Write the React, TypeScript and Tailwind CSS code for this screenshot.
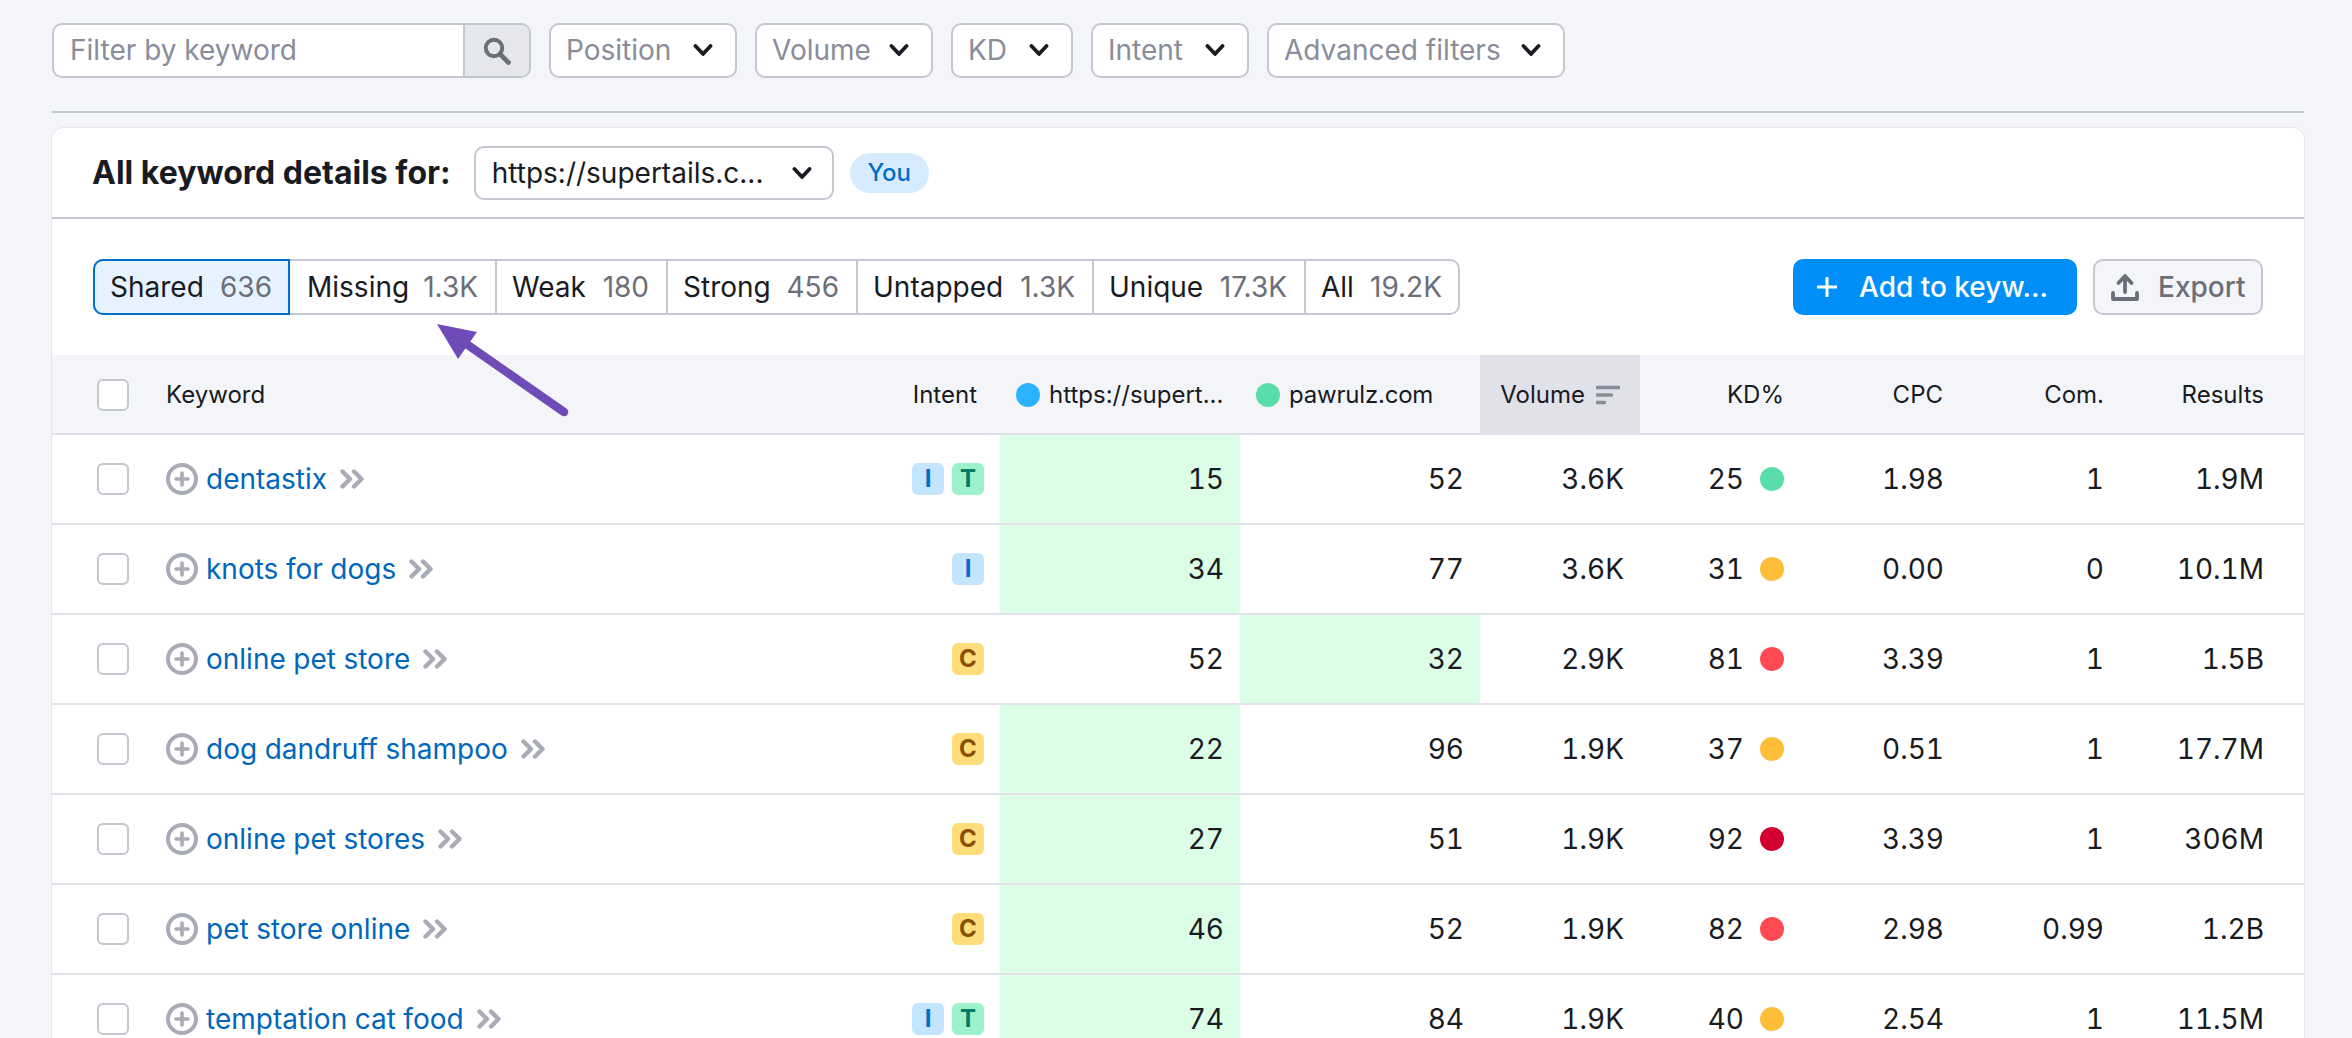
import React from 'react';

const rows = [
  { kw: 'dentastix', intent: ['I', 'T'], a: '15', b: '52', vol: '3.6K', kd: '25', dot: 'bg-[#59ddaa]', cpc: '1.98', com: '1', res: '1.9M', best: 'a' },
  { kw: 'knots for dogs', intent: ['I'], a: '34', b: '77', vol: '3.6K', kd: '31', dot: 'bg-[#ffbe37]', cpc: '0.00', com: '0', res: '10.1M', best: 'a' },
  { kw: 'online pet store', intent: ['C'], a: '52', b: '32', vol: '2.9K', kd: '81', dot: 'bg-[#ff4953]', cpc: '3.39', com: '1', res: '1.5B', best: 'b' },
  { kw: 'dog dandruff shampoo', intent: ['C'], a: '22', b: '96', vol: '1.9K', kd: '37', dot: 'bg-[#ffbe37]', cpc: '0.51', com: '1', res: '17.7M', best: 'a' },
  { kw: 'online pet stores', intent: ['C'], a: '27', b: '51', vol: '1.9K', kd: '92', dot: 'bg-[#d1002f]', cpc: '3.39', com: '1', res: '306M', best: 'a' },
  { kw: 'pet store online', intent: ['C'], a: '46', b: '52', vol: '1.9K', kd: '82', dot: 'bg-[#ff4953]', cpc: '2.98', com: '0.99', res: '1.2B', best: 'a' },
  { kw: 'temptation cat food', intent: ['I', 'T'], a: '74', b: '84', vol: '1.9K', kd: '40', dot: 'bg-[#ffbe37]', cpc: '2.54', com: '1', res: '11.5M', best: 'a' },
];

const tabs = [
  { label: 'Shared', count: '636', cls: 'my-[-2px] ml-[-2px] w-[197px] rounded-l-[10px] border-2 border-[#006dca] bg-[#e6f3ff] pl-[15px] pr-[16px]' },
  { label: 'Missing', count: '1.3K', cls: 'w-[205px] pl-[17px] pr-[17px]' },
  { label: 'Weak', count: '180', cls: 'w-[171px] border-l-2 border-[#c4c7cf] pl-[15px] pr-[17px]' },
  { label: 'Strong', count: '456', cls: 'w-[190px] border-l-2 border-[#c4c7cf] pl-[15px] pr-[17px]' },
  { label: 'Untapped', count: '1.3K', cls: 'w-[236px] border-l-2 border-[#c4c7cf] pl-[15px] pr-[17px]' },
  { label: 'Unique', count: '17.3K', cls: 'w-[212px] border-l-2 border-[#c4c7cf] pl-[15px] pr-[17px]' },
  { label: 'All', count: '19.2K', cls: 'w-[154px] border-l-2 border-[#c4c7cf] pl-[15px] pr-[16px]' },
];

const filters = [
  { label: 'Position', w: 'w-[188px]' },
  { label: 'Volume', w: 'w-[178px]' },
  { label: 'KD', w: 'w-[122px]' },
  { label: 'Intent', w: 'w-[158px]' },
  { label: 'Advanced filters', w: 'w-[298px]' },
];

const badgeStyles: Record<string, string> = {
  I: 'bg-[#c4e5fe] text-[#006dca]',
  T: 'bg-[#9ef2c9] text-[#007c65]',
  C: 'bg-[#ffdd7a] text-[#8a5000]',
};

const gridCols = 'grid grid-cols-[848px_100px_240px_240px_160px_160px_160px_160px_184px]';

function Chevron() {
  return (
    <svg width="20" height="14" viewBox="0 0 20 14" fill="none" className="shrink-0">
      <path d="M2.5 3l7.5 8 7.5-8" stroke="#191b23" strokeWidth="3.8" strokeLinecap="round" strokeLinejoin="round" />
    </svg>
  );
}

function Checkbox() {
  return <div className="h-8 w-8 shrink-0 rounded-md border-2 border-[#c4c7cf] bg-white" />;
}

function AddCircle() {
  return (
    <svg width="32" height="32" viewBox="0 0 32 32" fill="none" className="shrink-0">
      <circle cx="16" cy="16" r="14" stroke="#a9abb6" strokeWidth="4" />
      <path d="M16 10v12M10 16h12" stroke="#a9abb6" strokeWidth="3.6" strokeLinecap="round" />
    </svg>
  );
}

function DoubleChevron() {
  return (
    <svg width="25" height="20" viewBox="0 0 25 20" fill="none" className="shrink-0">
      <path d="M2.5 2.5l7.5 7.5-7.5 7.5M14 2.5l7.5 7.5-7.5 7.5" stroke="#a9abb6" strokeWidth="4.4" strokeLinecap="round" strokeLinejoin="round" />
    </svg>
  );
}

export default function App() {
  return (
    <div className="relative h-[1038px] w-[2352px] overflow-hidden bg-[#f4f5f9] pl-[52px] pr-[48px] pt-[23px] font-['Inter',sans-serif] text-[#191b23]">
      {/* filters */}
      <div className="flex h-[55px] items-stretch gap-[18px] text-[28px] text-[#898d9a]">
        <div className="flex w-[479px] overflow-hidden rounded-[10px] border-2 border-[#c4c7cf] bg-white">
          <div className="flex flex-1 items-center pb-[1px] pl-[16px]">Filter by keyword</div>
          <div className="flex w-[66px] items-center justify-center border-l-2 border-[#c4c7cf] bg-[#e6e7ed]">
            <svg width="28" height="28" viewBox="0 0 28 28" fill="none">
              <circle cx="11" cy="11" r="8.2" stroke="#6c6e79" strokeWidth="4" />
              <path d="M17 17l8.5 8.5" stroke="#6c6e79" strokeWidth="4.6" strokeLinecap="round" />
            </svg>
          </div>
        </div>
        {filters.map((f) => (
          <div
            key={f.label}
            className={`flex items-center justify-between rounded-[10px] border-2 border-[#c4c7cf] bg-white pb-[1px] pl-[15px] pr-[22px] ${f.w}`}
          >
            <span>{f.label}</span>
            <Chevron />
          </div>
        ))}
      </div>

      <div className="mt-[33px] h-[2px] bg-[#c4c7cf]" />

      {/* card */}
      <div className="mt-[15px] rounded-t-[12px] bg-white shadow-[0_0_0_1px_#e6e7ed]">
        <div className="flex h-[91px] items-center gap-[23px] border-b-2 border-[#c4c7cf] pl-[40px]">
          <span className="text-[32px] font-bold">All keyword details for:</span>
          <div className="flex h-[54px] w-[360px] items-center justify-between rounded-[10px] border-2 border-[#c4c7cf] pl-[16px] pr-[20px] text-[28px]">
            <span>https://supertails.c...</span>
            <Chevron />
          </div>
          <span className="ml-[-7px] flex h-[40px] w-[79px] items-center justify-center rounded-[20px] bg-[#d6ecfe] text-[24px] font-medium text-[#006dca]">
            You
          </span>
        </div>

        <div className="flex h-[136px] items-start justify-between pl-[41px] pr-[41px] pt-[40px]">
          <div className="flex h-[56px] rounded-[10px] border-2 border-[#c4c7cf] text-[28px]">
            {tabs.map((t) => (
              <div key={t.label} className={`flex items-center justify-between ${t.cls}`}>
                <span>{t.label}</span>
                <span className="text-[#6c6e79]">{t.count}</span>
              </div>
            ))}
          </div>

          <div className="flex gap-[16px]">
            <div className="flex h-[56px] w-[284px] items-center gap-[22px] rounded-[10px] bg-[#008ff8] pl-[24px] text-[28px] font-medium text-white">
              <svg width="20" height="20" viewBox="0 0 20 20" fill="none">
                <path d="M10 1v18M1 10h18" stroke="#fff" strokeWidth="3" strokeLinecap="round" />
              </svg>
              <span>Add to keyw...</span>
            </div>
            <div className="flex h-[56px] w-[170px] items-center gap-[19px] rounded-[10px] border-2 border-[#c4c7cf] bg-[#f4f5f9] pl-[16px] text-[28px] font-medium text-[#6c6e79]">
              <svg width="28" height="28" viewBox="0 0 28 28" fill="none">
                <path d="M14 19V4M7.5 10L14 3l6.5 7" stroke="#6c6e79" strokeWidth="3.8" strokeLinecap="round" strokeLinejoin="round" />
                <path d="M2 20v6h24v-6" stroke="#6c6e79" strokeWidth="3.8" strokeLinecap="round" strokeLinejoin="round" />
              </svg>
              <span>Export</span>
            </div>
          </div>
        </div>

        {/* table header */}
        <div className={`${gridCols} h-[80px] border-b-2 border-[#e0e1e9] bg-[#f4f5f9] pt-[2px] text-[24px]`}>
          <div className="flex items-center gap-[37px] pl-[45px]">
            <Checkbox />
            <span>Keyword</span>
          </div>
          <div className="flex items-center justify-end pr-[23px]">Intent</div>
          <div className="flex items-center gap-[9px] pl-[16px]">
            <span className="h-6 w-6 rounded-full bg-[#2bb3ff]" />
            <span>https://supert...</span>
          </div>
          <div className="flex items-center gap-[9px] pl-[16px]">
            <span className="h-6 w-6 rounded-full bg-[#59ddaa]" />
            <span className="tracking-[-0.2px]">pawrulz.com</span>
          </div>
          <div className="mt-[-2px] flex items-center justify-end gap-[11px] bg-[#e0e1e9] pr-[20px] pt-[2px]">
            <span>Volume</span>
            <svg width="24" height="20" viewBox="0 0 24 20" fill="none">
              <path d="M1.5 2.5h21M1.5 10h14M1.5 17.5h7" stroke="#898d9a" strokeWidth="3.6" strokeLinecap="round" />
            </svg>
          </div>
          <div className="flex items-center justify-end pr-[16px]">KD%</div>
          <div className="flex items-center justify-end pr-[17px]">CPC</div>
          <div className="flex items-center justify-end pr-[16px]">Com.</div>
          <div className="flex items-center justify-end pr-[40px]">Results</div>
        </div>

        {/* table rows */}
        {rows.map((r) => (
          <div key={r.kw} className={`${gridCols} h-[90px] border-b-2 border-[#e0e1e9] bg-white text-[28px] tabular-nums`}>
            <div className="flex items-center pl-[45px]">
              <Checkbox />
              <div className="ml-[37px] flex items-center">
                <AddCircle />
                <span className="ml-[8px] text-[#0067bd]">{r.kw}</span>
                <span className="ml-[13px]">
                  <DoubleChevron />
                </span>
              </div>
            </div>
            <div className="flex items-center justify-end gap-2 pr-[16px]">
              {r.intent.map((x) => (
                <span key={x} className={`flex h-8 w-8 items-center justify-center rounded-md text-[24px] font-bold ${badgeStyles[x]}`}>
                  {x}
                </span>
              ))}
            </div>
            <div className={`flex items-center justify-end pr-[16px] ${r.best === 'a' ? 'bg-[#dcfde6]' : ''}`}>{r.a}</div>
            <div className={`flex items-center justify-end pr-[16px] ${r.best === 'b' ? 'bg-[#dcfde6]' : ''}`}>{r.b}</div>
            <div className="flex items-center justify-end pr-[16px]">{r.vol}</div>
            <div className="flex items-center justify-end gap-[16px] pr-[16px]">
              <span>{r.kd}</span>
              <span className={`h-6 w-6 rounded-full ${r.dot}`} />
            </div>
            <div className="flex items-center justify-end pr-[16px]">{r.cpc}</div>
            <div className="flex items-center justify-end pr-[16px]">{r.com}</div>
            <div className="flex items-center justify-end pr-[40px]">{r.res}</div>
          </div>
        ))}
      </div>

      {/* annotation arrow */}
      <svg width="2352" height="1038" viewBox="0 0 2352 1038" fill="none" className="pointer-events-none absolute left-0 top-0">
        <path d="M437 324L477 332L458 359Z" fill="#6f4bb8" />
        <path d="M465 343L564 412" stroke="#6f4bb8" strokeWidth="8.5" strokeLinecap="round" />
      </svg>
    </div>
  );
}
